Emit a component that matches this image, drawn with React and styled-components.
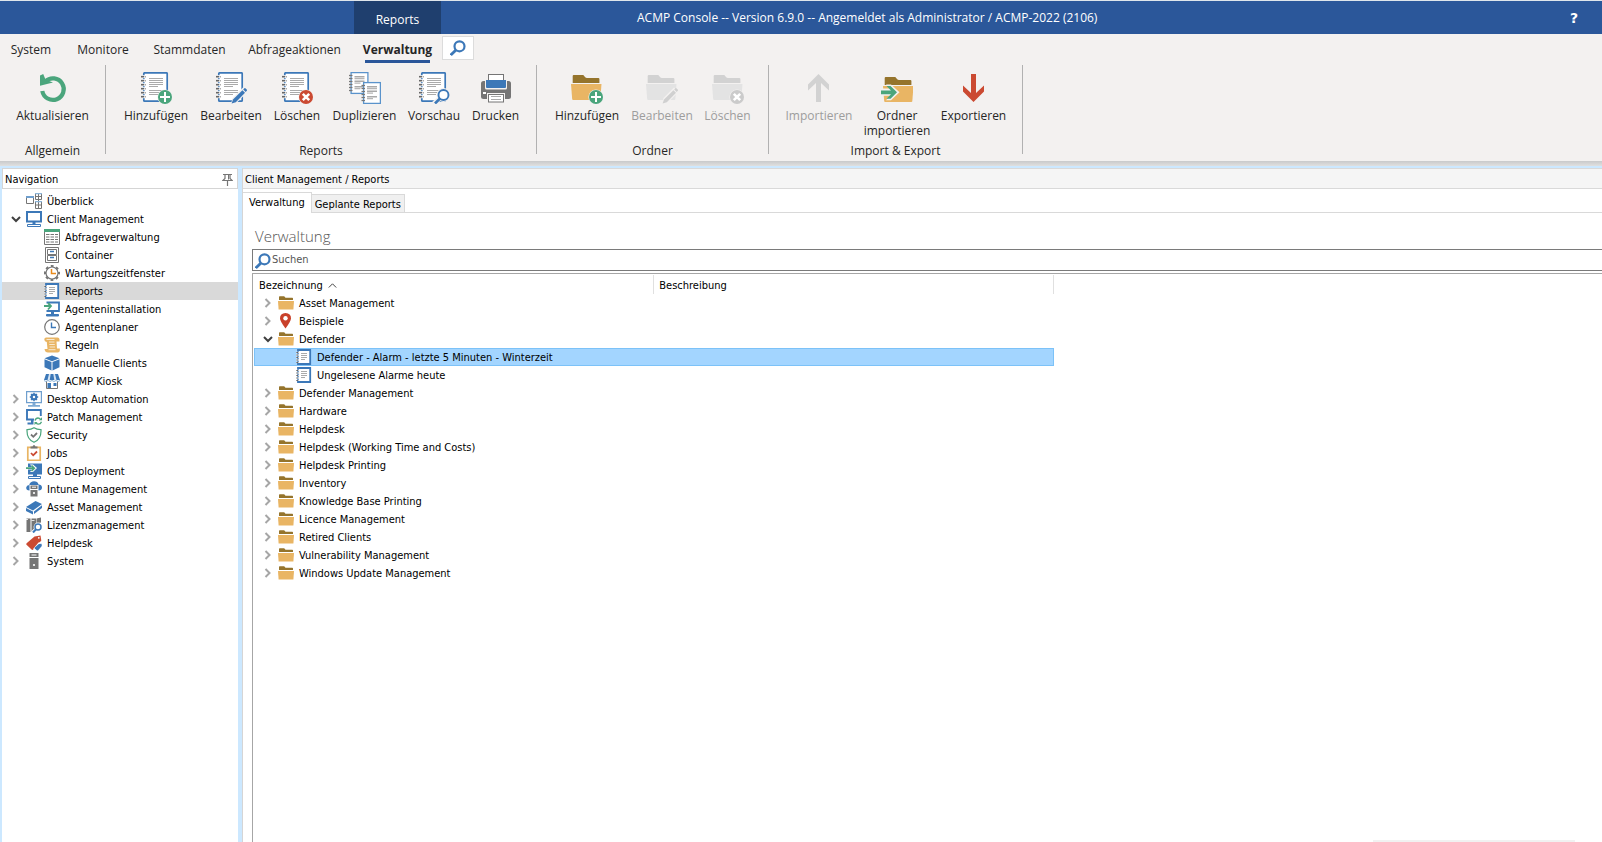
import React, { useState } from 'react';
import styled, { createGlobalStyle, css } from 'styled-components';

const BLUE = '#3c78b8';
const GREEN = '#4aa57c';
const RED = '#cb4a32';
const GREY = '#757575';
const SAND = '#e9b564';
const BROWN = '#95742c';

const GlobalStyle = createGlobalStyle`
  * {
    box-sizing: border-box;
  }

  html,
  body,
  #root {
    height: 100%;
    margin: 0;
  }

  body {
    font-family: 'DejaVu Sans Condensed', Tahoma, sans-serif;
    font-size: 11px;
    color: #000;
    background: #fff;
    overflow: hidden;
  }

  button,
  input {
    font: inherit;
    color: inherit;
    border: 0;
    padding: 0;
    margin: 0;
    background: none;
  }

  ul {
    list-style: none;
    margin: 0;
    padding: 0;
  }

  a {
    color: inherit;
    text-decoration: none;
  }

  svg {
    display: block;
    flex: none;
  }
`;

const StyledApp = styled.div`
  position: relative;
  display: flex;
  flex-direction: column;
  min-height: 100%;
  overflow: hidden;
`;

const StyledTitleBar = styled.header`
  display: flex;
  height: 34px;
  padding-left: 354px;
  border-top: 1px solid #dfe6ec;
  background: #2b579a;
  color: #fff;
  font-family: 'Open Sans', 'Segoe UI', sans-serif;
  font-size: 12px;

  .context-tab {
    width: 87px;
    padding-top: 4px;
    background: #1f3f6e;
  }

  .title {
    flex: 1;
    margin: 0 0 0 196px;
    font-size: inherit;
    font-weight: 400;
    line-height: 33px;
  }

  .help {
    width: 56px;
    padding-top: 1px;
    font-family: 'DejaVu Sans', sans-serif;
    font-size: 14px;
    font-weight: 700;
  }
`;

const StyledRibbon = styled.div`
  background: #f3f1f0;
  color: #262626;
  font-family: 'Open Sans', 'Segoe UI', sans-serif;
  font-size: 12px;
  padding-bottom: 7px;
`;

const StyledMenu = styled.nav`
  display: flex;
  height: 31px;
  padding-left: 11px;
`;

const MenuTab = styled.button`
  display: flex;
  align-items: center;
  justify-content: center;
  width: ${props => props.$width}px;
  height: 29px;
  padding-top: 1px;
  margin-right: 27px;
  white-space: nowrap;

  ${props =>
    props.$active &&
    css`
      margin-right: 12px;
      padding-top: 4px;
      border-bottom: 3px solid #2b579a;
      font-weight: 700;
    `}
`;

const MenuSearch = styled.button`
  display: flex;
  align-items: center;
  justify-content: center;
  width: 32px;
  height: 24px;
  margin-top: 2px;
  border: 1px solid #dcdcdc;
  background: #fff;
`;

const StyledGroups = styled.div`
  display: flex;
`;

const RibbonGroup = styled.section`
  display: flex;
  flex-direction: column;
  justify-content: space-between;
  align-items: center;
  height: 89px;
  padding: 7px 11px 0;
  border-right: 1px solid #b1b1b1;

  .buttons {
    display: flex;
  }

  h2 {
    margin: 0;
    font-size: inherit;
    font-weight: 400;
    line-height: 7px;
  }
`;

const RibbonButton = styled.button`
  display: flex;
  flex-direction: column;
  align-items: center;
  width: ${props => props.$width}px;
  text-align: center;

  span {
    margin-top: 4px;
    line-height: 15px;
    white-space: pre;
  }

  &:disabled {
    color: #9d9d9d;
  }
`;

const StyledShadow = styled.div`
  height: 5px;
  background: linear-gradient(#c9cacb, #e0e0e0);
`;

const StyledWorkspace = styled.div`
  flex: 1;
  display: flex;
  gap: 4px;
  padding: 2px 0 0 2px;
  background: #cce8ff;
`;

const StyledSidebar = styled.aside`
  width: 236px;
  background: #fff;

  header {
    display: flex;
    align-items: center;
    justify-content: space-between;
    height: 21px;
    padding: 1px 4px 0 2px;
    border: 1px solid #d5d5d5;
  }

  > ul {
    padding-top: 3px;
  }
`;

const NavRow = styled.a`
  display: flex;
  align-items: center;
  height: 18px;
  padding-left: ${props => props.$level * 18}px;
  background: ${props => (props.$selected ? '#d9d9d9' : 'transparent')};
  white-space: nowrap;

  .chevron {
    width: 24px;
    padding-left: 9px;
  }

  .label {
    margin-left: 5px;
  }
`;

const StyledContent = styled.main`
  flex: 1;
  min-width: 0;
  display: flex;
  flex-direction: column;
  background: #fff;
  border-left: 1px solid #d5d5d5;

  h1 {
    margin: 12px 0 2px 12px;
    font-family: 'Open Sans', 'Segoe UI', sans-serif;
    font-size: 15px;
    font-weight: 300;
    line-height: 22px;
    color: #555;
  }
`;

const Breadcrumb = styled.nav`
  height: 21px;
  padding: 1px 0 0 2px;
  line-height: 19px;
  border: 1px solid #d9d9d9;
  border-width: 1px 0;
  background: #f5f5f5;
`;

const StyledTabs = styled.div`
  display: flex;
  align-items: flex-end;
  height: 24px;
  border-bottom: 1px solid #d9d9d9;
`;

const PageTab = styled.button`
  height: 18px;
  padding: 2px 3px 0;
  border: 1px solid #d9d9d9;
  border-width: 1px 1px 0 0;
  background: #f0f0f0;

  ${props =>
    props.$active &&
    css`
      height: 21px;
      padding: 0 6px 2px;
      margin-bottom: -1px;
      background: #fff;
    `}
`;

const SearchBox = styled.label`
  display: flex;
  align-items: center;
  height: 22px;
  margin-left: 9px;
  padding: 1px 0 0 2px;
  border: 1px solid #7a7a7a;
  border-right: 0;

  input {
    flex: 1;
    margin: 0 0 2px 1px;
    outline: 0;
  }

  input::placeholder {
    color: #555;
    opacity: 1;
  }
`;

const GridBox = styled.div`
  flex: 1;
  margin: 2px 0 0 9px;
  padding: 1px;
  border: 1px solid #a6a6a6;
  border-width: 1px 0 0 1px;
`;

const ReportTable = styled.table`
  width: 800px;
  table-layout: fixed;
  border-collapse: collapse;

  th {
    height: 19px;
    padding: 1px 0 0 5px;
    border-right: 1px solid #e0e0e0;
    font-weight: 400;
    text-align: left;
  }

  th > div {
    display: flex;
    align-items: center;
    gap: 5px;
  }

  td {
    height: 18px;
    padding: 0;
    white-space: nowrap;
  }
`;

const ReportRow = styled.tr`
  ${props =>
    props.$selected &&
    css`
      background: #a3d5ff;
      box-shadow: inset 0 0 0 1px #7cc2f8;
    `}

  .name {
    display: flex;
    align-items: center;
    padding-left: ${props => props.$level * 18}px;
  }

  .chevron {
    width: 24px;
    padding-left: 9px;
  }

  .label {
    margin-left: 5px;
  }
`;

const NotificationEdge = styled.div`
  position: absolute;
  right: 27px;
  bottom: 0;
  width: 202px;
  height: 2px;
  background: #f1f1f1;
`;

/* ---------- large ribbon icons ---------- */

const Big = ({ children }) => (
  <svg width="32" height="32" viewBox="0 0 32 32" fill="none" aria-hidden="true">
    {children}
  </svg>
);

const Plus = () => (
  <g>
    <circle cx="25" cy="25" r="7.6" fill="#f3f1f0" />
    <circle cx="25" cy="25" r="7" fill={GREEN} />
    <path d="M25 20v10M20 25h10" stroke="#fff" strokeWidth="2" />
  </g>
);

const Cross = ({ color = RED }) => (
  <g>
    <circle cx="25" cy="25" r="7.6" fill="#f3f1f0" />
    <circle cx="25" cy="25" r="7" fill={color} />
    <path d="M21.8 21.8l6.4 6.4M28.2 21.8l-6.4 6.4" stroke="#fff" strokeWidth="2.6" />
  </g>
);

const Pencil = ({ color = BLUE }) => (
  <g>
    <path d="M16 32l1.5-6L28 15.5l5 4L21.5 31z" fill="#f3f1f0" />
    <path d="M16.6 31.6l1.4-4.2 9.4-9.2 2.6 2.6-9.2 9.4z" fill={color} />
    <path d="M28.2 17.4l1.2-1.2q.7-.4 1.3.2l1 1q.6.7.1 1.400l-1.1 1.100z" fill={color} />
  </g>
);

const Sheet = () => (
  <g>
    <rect x="3.8" y=".8" width="23.4" height="28.4" rx=".8" fill="#fff" stroke={BLUE} strokeWidth="1.7" />
    {[4, 8, 12, 16, 20, 24].map(y => (
      <g key={y}>
        <rect x="2.5" y={y - 0.8} width="2.8" height="3" fill="#fff" />
        <path d={`M1 ${y + 0.7}h3`} stroke="#666" strokeWidth="1.6" />
        <path d={`M4.6 ${y + 0.7}h1.2`} stroke="#999" strokeWidth="1.4" />
      </g>
    ))}
    <path
      d="M9 6.5h14M9 8.5h14M9 10.5h14M9 12.5h14M9 14.5h9M9 18.5h14M9 20.5h14M9 22.5h9"
      stroke="#aaa"
    />
  </g>
);

const SmallSheet = ({ x, y }) => (
  <g transform={`translate(${x} ${y})`}>
    <rect x="2.6" y=".6" width="16.8" height="20.8" fill="#fff" stroke="#5a93cb" strokeWidth="1.3" />
    {[3.5, 6.5, 9.5, 12.5, 15.5, 18.5].map(v => (
      <path key={v} d={`M.5 ${v}h3.5`} stroke="#777" strokeWidth="1.3" />
    ))}
    <path d="M6 4.7h10M6 9.2h10M6 14.7h10" stroke="#aaa" strokeWidth="1.4" />
    <path d="M6 6.7h10M6 11.2h6M6 16.7h6" stroke="#b5b5b5" strokeWidth="1.3" />
  </g>
);

const Folder = ({ off, x = 0, y = 0 }) => (
  <g transform={`translate(${x} ${y})`}>
    <path
      d="M1.7 11V4q0-1 1-1h9.6l1.7 2q.8 1 2 1h11.4q1 0 1 1v4z"
      fill={off ? '#d2d2d2' : BROWN}
    />
    <path
      d="M0 12h30.5l-1.2 15.2q-.1.8-1 .8H2.2q-.9 0-1-.8z"
      fill={off ? '#e3e3e3' : SAND}
    />
  </g>
);

const UP_ARROW = 'M15.5 2L26 12.5v6L18 11v19h-5V11l-8 7.5v-6z';

const RefreshIcon = () => (
  <Big>
    <path d="M5.3 19A10.8 10.8 0 1 0 8.5 9.3" stroke={GREEN} strokeWidth="4.2" />
    <path d="M3 3.5L6.2 2l2.3 5.500 7.500 3-13 3.200z" fill={GREEN} />
  </Big>
);

const SheetAdd = () => (
  <Big>
    <Sheet />
    <Plus />
  </Big>
);

const SheetEdit = () => (
  <Big>
    <Sheet />
    <Pencil />
  </Big>
);

const SheetDelete = () => (
  <Big>
    <Sheet />
    <Cross />
  </Big>
);

const SheetCopy = () => (
  <Big>
    <SmallSheet x={-0.5} y={0} />
    <SmallSheet x={12} y={10} />
  </Big>
);

const SheetPreview = () => (
  <Big>
    <Sheet />
    <circle cx="25.5" cy="23" r="7" fill="#f3f1f0" />
    <path d="M22 26l-6 5.5" stroke="#f3f1f0" strokeWidth="5" />
    <circle cx="25.5" cy="23" r="5" fill="#fff" stroke={BLUE} strokeWidth="1.9" />
    <path d="M22 26.5l-5 5" stroke={BLUE} strokeWidth="2.6" />
  </Big>
);

const PrinterIcon = () => (
  <Big>
    <rect x="1" y="9" width="30" height="18" rx="2.5" fill={GREY} />
    <rect x="8.5" y="2.5" width="15" height="8" fill="#fff" stroke={GREY} />
    <path d="M5 7h22v9q0 1.5-1.5 1.5h-19Q5 17.5 5 16z" fill="#f3f1f0" />
    <path d="M6 8h20v7q0 1-1 1H7q-1 0-1-1z" fill={BLUE} />
    <path d="M9 3h14v5H9z" fill="#fff" />
    <path d="M8.500 8V2.500h15V8" stroke={GREY} />
    <rect x="3" y="20" width="3" height="2" fill="#fff" />
    <path d="M7 27v-6h18v6z" fill="#f3f1f0" />
    <rect x="8.5" y="22.5" width="15" height="7.5" fill="#fff" stroke={GREY} />
    <path d="M11 24.5h10M11 27.5h10" stroke="#aaa" />
  </Big>
);

const FolderAdd = () => (
  <Big>
    <Folder />
    <Plus />
  </Big>
);

const FolderEditOff = () => (
  <Big>
    <Folder off />
    <Pencil color="#d0d0d0" />
  </Big>
);

const FolderDeleteOff = () => (
  <Big>
    <Folder off />
    <Cross color="#cbcbcb" />
  </Big>
);

const ImportOff = () => (
  <Big>
    <path d={UP_ARROW} fill="#d2d2d2" />
  </Big>
);

const FolderImport = () => (
  <Big>
    <Folder x={2} y={2} />
    <path d="M-1 16.5h10l-4-4h5l8.5 7.8-8.5 8H5l4-4.5H-1z" fill="#f3f1f0" />
    <path d="M0 18.5h10L5.500 14h4l6.500 6.300-6.500 6.500h-4l4.500-4.600H0z" fill={GREEN} />
  </Big>
);

const ExportIcon = () => (
  <Big>
    <path d={UP_ARROW} fill={RED} transform="rotate(180 15.5 16)" />
  </Big>
);

const Magnifier = () => (
  <svg width="16" height="16" viewBox="0 0 16 16" fill="none" aria-hidden="true">
    <circle cx="9.5" cy="6.3" r="5" stroke={BLUE} strokeWidth="2.2" />
    <path d="M6 10l-5.2 5" stroke={BLUE} strokeWidth="2.8" />
  </svg>
);

/* ---------- 16px tree icons ---------- */

const Small = ({ children }) => (
  <svg width="16" height="16" viewBox="0 0 16 16" fill="none" aria-hidden="true">
    {children}
  </svg>
);

const OverviewIcon = () => (
  <Small>
    <path d="M.5 3.5h7v7h-7z" stroke={GREY} />
    <path d="M0 3h8v2H0z" fill="#6f9fce" />
    <path d="M9.5.5h6v6h-6zM9.5 8.5h6v7h-6zM12.5.5v15M9 3.5h6.5M9 12h6.5" stroke={GREY} />
    <path d="M9 0h7v1.3H9zM9 8h7v1.3H9z" fill="#8cb4d8" />
  </Small>
);

const MonitorIcon = () => (
  <Small>
    <path d="M1 1h14v9.5H1z" fill="#fff" stroke={BLUE} strokeWidth="2" />
    <path d="M6.5 11h3v2h-3z" fill={BLUE} />
    <path d="M1.5 13.5h13v2h-13z" stroke={BLUE} />
  </Small>
);

const ListIcon = () => (
  <Small>
    <path d="M.5 2v13.5h15V2" fill="#fff" stroke={GREY} />
    <path d="M0 0h16v3H0z" fill={GREEN} />
    {[5.5, 8, 10.5, 13].map(y => (
      <path key={y} d={`M2 ${y}h3.5M6.5 ${y}h3.5M11 ${y}h3`} stroke={GREY} />
    ))}
  </Small>
);

const ContainerIcon = () => (
  <Small>
    <path d="M1.5.5h13v15h-13z" fill="#fff" stroke={GREY} />
    <path d="M3.5 2.5h9v5h-9zM3.5 8.5h9v5h-9z" stroke={GREY} />
    <path d="M6 4.5h4M6 10.5h4" stroke={BLUE} strokeWidth="1.5" />
  </Small>
);

const MaintenanceIcon = () => (
  <Small>
    <circle
      cx="8"
      cy="8"
      r="7"
      stroke={GREY}
      strokeWidth="2"
      strokeDasharray="2.75 2.75"
      strokeDashoffset="1.4"
    />
    <circle cx="8" cy="8" r="6" fill="#fff" stroke={GREY} strokeWidth="1.2" />
    <path d="M7.5 4v4.5H12" stroke="#e98a1c" strokeWidth="1.5" />
  </Small>
);

const ReportIcon = () => (
  <Small>
    <path d="M2 1h12.2v14H2z" fill="#fff" stroke={BLUE} strokeWidth="1.8" />
    <path d="M1.5 2.700v11.300" stroke="#fff" strokeWidth="3" strokeDasharray="1.5 1" />
    <path d="M.3 3.5h2M.3 6h2M.3 8.5h2M.3 11h2M.3 13.5h2" stroke="#666" />
    <path d="M5 4.5h6M5 6.5h6M5 8.5h6M5 10.5h4" stroke="#aaa" />
  </Small>
);

const AgentInstallIcon = () => (
  <Small>
    <path d="M2.5 1.5h12.5V10H2.5" fill="#fff" stroke={BLUE} strokeWidth="1.8" />
    <path d="M7 10.5h3V13H7z" fill={BLUE} />
    <path d="M2.5 13.5h12V15h-12z" fill={BLUE} stroke={BLUE} />
    <path d="M0 5h6M4 2l3 3-3 3.500" stroke={GREEN} strokeWidth="1.8" />
  </Small>
);

const ClockIcon = () => (
  <Small>
    <circle cx="8" cy="8" r="7.3" fill="#fff" stroke={GREY} strokeWidth="1.2" />
    <path d="M7.5 3.5v5H12" stroke={BLUE} strokeWidth="1.4" />
  </Small>
);

const RulesIcon = () => (
  <Small>
    <path
      d="M2.500 .5h11q2 0 2 2v2h-3L13 11.500h2.800v2q0 2-2.200 2H4q-3 0-3.500-3.500h3L2.800 5Q.3 4.700 .3 2.500t2.200-2z"
      fill={SAND}
    />
    <path d="M5 5h5.500M5.300 7.500h5.500M5.600 10h5.500M4.500 12.700h7M2.500 2.500h8" stroke="#fff" strokeWidth=".7" />
  </Small>
);

const CubeIcon = () => (
  <Small>
    <path
      d="M8 .5l7.5 2.7L8 6.2.5 3.2zM.5 4.3l7 2.8v8.400l-7-3.200zM15.5 4.3l-7 2.8v8.400l7-3.200z"
      fill={BLUE}
    />
  </Small>
);

const KioskIcon = () => (
  <Small>
    <path d="M2 1h12l2 6H0z" fill={BLUE} />
    <path d="M5 1L3.500 7h2.200L6.700 1zM11 1l1.500 6h-2.200L9.300 1z" fill="#d5e4f3" />
    <path d="M2.500 8v7.5h11V8" fill="#fff" stroke={GREY} />
    <path d="M3.500 10h3.500v5H3.500zM9.500 10h3v3h-3z" fill={BLUE} />
    <path d="M0 7.500q2 2 4 0 2 2 4 0 2 2 4 0 2 2 4 0" stroke="#8cb4d8" />
  </Small>
);

const AutomationIcon = () => (
  <Small>
    <path d="M.6.6h14.800v11H.6z" fill="#fff" stroke="#6f9fce" strokeWidth="1.2" />
    <circle cx="8" cy="6" r="2.3" stroke={BLUE} strokeWidth="2.2" />
    <path
      d="M8 1.800v1.700M8 8.500v1.700M3.800 6h1.700M10.500 6h1.700M5 3l1 1M11 3l-1 1M5 9l1-1M11 9l-1-1"
      stroke={BLUE}
      strokeWidth="1.3"
    />
    <path d="M6.500 12h3v2h-3zM2 14h12v1.800H2z" fill="#7eaad4" />
  </Small>
);

const PatchIcon = () => (
  <Small>
    <path d="M8 10.500H1V1h13.800v6" fill="#fff" stroke={BLUE} strokeWidth="1.9" />
    <path d="M5 10.500h2.500v3H5zM1.500 13.500h6v2h-6z" fill={BLUE} />
    <path
      d="M9 11.500q.8-2.500 3-2.500 1.500 0 2.500 1.300M15.500 12.800q-.8 2.400-3 2.400-1.500 0-2.500-1.300"
      stroke={GREEN}
      strokeWidth="1.3"
    />
    <path d="M16 8.300v3h-3zM8.500 16v-3h3z" fill={GREEN} />
  </Small>
);

const ShieldIcon = () => (
  <Small>
    <path
      d="M8 .8q3 2 7 1.900.4 9.300-7 12.600Q.6 12 1 2.700 5 2.800 8 .8z"
      fill="#fff"
      stroke={GREEN}
      strokeWidth="1.2"
    />
    <path d="M5 7.500l2.300 2.300L11 6" stroke={GREY} strokeWidth="1.8" />
  </Small>
);

const JobsIcon = () => (
  <Small>
    <path d="M1.800 2.300h12.400v13H1.800z" fill="#fff" stroke={SAND} strokeWidth="1.7" />
    <path d="M4.500 1.500h2Q7 0 8 0t1.500 1.500h2v2h-7z" fill={GREY} />
    <path d="M5 8l2.200 2.300L11 6.500" stroke={RED} strokeWidth="1.8" />
  </Small>
);

const DeployIcon = () => (
  <Small>
    <path d="M2 .5h14v11H2z" fill={BLUE} />
    <path d="M7 11h4v2.500H7z" fill={BLUE} />
    <path d="M2.500 13.500h12v2h-12z" stroke={BLUE} />
    <path d="M0 4h6L4 1.500h3L11 5 7 9H4l2-2.500H0z" fill="#fff" />
    <path d="M0 5.200h8M5.500 2.500l2.800 2.700-2.800 2.800" stroke={GREEN} strokeWidth="1.7" />
  </Small>
);

const IntuneIcon = () => (
  <Small>
    <path
      d="M3.500 9.500Q0 9.500.2 6.500.5 4 3.200 4 4.300.3 8 .3T12.500 3.500q3.300 0 3.500 3 0 3-3.500 3z"
      fill={BLUE}
    />
    <path d="M3.500 4h9v12h-9z" fill="#fff" />
    <path d="M4.500 4.500h7V8h-7zM4.500 9h7v6.500h-7z" fill={GREY} />
    <path d="M6 6.200h4" stroke="#fff" />
    <circle cx="8" cy="12" r="1.1" fill="#fff" />
  </Small>
);

const AssetIcon = () => (
  <Small>
    <path d="M9.500 2L16 5 7 11.500 0 8zM0 9l7 3.500v3L0 12zM8 12.400l8-6.200V9l-8 6z" fill={BLUE} />
  </Small>
);

const LicenceIcon = () => (
  <Small>
    <path d="M.5 1.500h4V15h-4zM5.500 1.500h4.500V15H5.500zM10.500 1.500l4.500-1v5l-4.500 1z" fill={GREY} />
    <path d="M0 2.500h2M5.500 3.500h3" stroke="#fff" strokeWidth=".8" />
    <circle cx="12" cy="10" r="4.4" fill="#fff" />
    <path d="M10 12.500l-3.500 3.500" stroke="#fff" strokeWidth="4" />
    <circle cx="12" cy="10" r="3" fill="#fff" stroke={BLUE} strokeWidth="1.5" />
    <path d="M9.800 12.500L7 15.500" stroke={BLUE} strokeWidth="2" />
  </Small>
);

const HelpdeskIcon = () => (
  <Small>
    <path
      d="M8.500 1.500L14.500.5l.8 5L7.500 14.500Q6.500 15.300 5.500 14.500L.5 9.800Q0 9 .6 8.200z"
      fill={RED}
    />
    <circle cx="12.8" cy="2.8" r=".9" fill="#fff" />
    <path d="M12.500 7.500l4-.5v4L12 16H7.500v-2.500z" fill="#fff" />
    <path
      d="M12.800 9l2.700-.3.300 2.300-3.600 4.300q-.6.500-1.200.1L8.800 13.500q-.4-.6 0-1.100z"
      fill={BLUE}
    />
  </Small>
);

const ServerIcon = () => (
  <Small>
    <path d="M3.500 0h9v4h-9zM3.500 5h9v11h-9z" fill={GREY} />
    <path d="M5.500 2h5" stroke="#fff" />
    <circle cx="8" cy="12" r="1.1" fill="#fff" />
  </Small>
);

const FolderIcon = () => (
  <Small>
    <path d="M1 5V2q0-.7.7-.7h4.500l1.300 1.400h6.800q.7 0 .7.7V5z" fill={BROWN} />
    <path d="M0 6h16l-.6 8.500H.6z" fill={SAND} />
  </Small>
);

const PinIcon = () => (
  <Small>
    <path d="M7.500 0Q13 .3 13 5.300q0 3-5.500 10.200Q2 8.300 2 5.300 2 .3 7.500 0z" fill="#c9412b" />
    <circle cx="7.5" cy="5.3" r="2.2" fill="#fff" />
  </Small>
);

const PushPin = () => (
  <svg width="11" height="13" viewBox="0 0 11 13" fill="none" stroke={GREY} aria-hidden="true">
    <path d="M1 1.500h9M3 1.500v4L.8 7.500h9.400L8 5.500v-4M5.500 8v5" strokeWidth="1.2" />
    <path d="M6.500 2v4.500" />
  </svg>
);

const Chevron = ({ open }) => (
  <svg width="10" height="10" viewBox="0 0 10 10" fill="none" aria-hidden="true">
    {open ? (
      <path d="M1 3l4 4 4-4" stroke="#404040" strokeWidth="2" />
    ) : (
      <path d="M2.500 1l4 4-4 4" stroke="#a6a6a6" strokeWidth="2" />
    )}
  </svg>
);

const SortArrow = () => (
  <svg width="9" height="5" viewBox="0 0 9 5" fill="none" aria-hidden="true">
    <path d="M.8 4.500L4.500.8l3.700 3.700" stroke="#444" />
  </svg>
);

/* ---------- data ---------- */

const menuTabs = [
  { label: 'System', width: 40 },
  { label: 'Monitore', width: 50 },
  { label: 'Stammdaten', width: 69 },
  { label: 'Abfrageaktionen', width: 87 },
  { label: 'Verwaltung', width: 65, active: true },
];

const ribbonGroups = [
  {
    title: 'Allgemein',
    buttons: [{ label: 'Aktualisieren', width: 83, icon: RefreshIcon }],
  },
  {
    title: 'Reports',
    buttons: [
      { label: 'Hinzufügen', width: 78, icon: SheetAdd },
      { label: 'Bearbeiten', width: 72, icon: SheetEdit },
      { label: 'Löschen', width: 60, icon: SheetDelete },
      { label: 'Duplizieren', width: 75, icon: SheetCopy },
      { label: 'Vorschau', width: 64, icon: SheetPreview },
      { label: 'Drucken', width: 59, icon: PrinterIcon },
    ],
  },
  {
    title: 'Ordner',
    buttons: [
      { label: 'Hinzufügen', width: 78, icon: FolderAdd },
      { label: 'Bearbeiten', width: 72, icon: FolderEditOff, disabled: true },
      { label: 'Löschen', width: 59, icon: FolderDeleteOff, disabled: true },
    ],
  },
  {
    title: 'Import & Export',
    buttons: [
      { label: 'Importieren', width: 78, icon: ImportOff, disabled: true },
      { label: 'Ordner\nimportieren', width: 78, icon: FolderImport },
      { label: 'Exportieren', width: 75, icon: ExportIcon },
    ],
  },
];

const navItems = [
  { label: 'Überblick', icon: OverviewIcon, leaf: true },
  { label: 'Client Management', icon: MonitorIcon, open: true },
  { label: 'Abfrageverwaltung', icon: ListIcon, level: 1 },
  { label: 'Container', icon: ContainerIcon, level: 1 },
  { label: 'Wartungszeitfenster', icon: MaintenanceIcon, level: 1 },
  { label: 'Reports', icon: ReportIcon, level: 1 },
  { label: 'Agenteninstallation', icon: AgentInstallIcon, level: 1 },
  { label: 'Agentenplaner', icon: ClockIcon, level: 1 },
  { label: 'Regeln', icon: RulesIcon, level: 1 },
  { label: 'Manuelle Clients', icon: CubeIcon, level: 1 },
  { label: 'ACMP Kiosk', icon: KioskIcon, level: 1 },
  { label: 'Desktop Automation', icon: AutomationIcon },
  { label: 'Patch Management', icon: PatchIcon },
  { label: 'Security', icon: ShieldIcon },
  { label: 'Jobs', icon: JobsIcon },
  { label: 'OS Deployment', icon: DeployIcon },
  { label: 'Intune Management', icon: IntuneIcon },
  { label: 'Asset Management', icon: AssetIcon },
  { label: 'Lizenzmanagement', icon: LicenceIcon },
  { label: 'Helpdesk', icon: HelpdeskIcon },
  { label: 'System', icon: ServerIcon },
];

const reports = [
  { label: 'Asset Management' },
  { label: 'Beispiele', icon: PinIcon },
  { label: 'Defender', open: true },
  { label: 'Defender - Alarm - letzte 5 Minuten - Winterzeit', icon: ReportIcon, level: 1 },
  { label: 'Ungelesene Alarme heute', icon: ReportIcon, level: 1 },
  { label: 'Defender Management' },
  { label: 'Hardware' },
  { label: 'Helpdesk' },
  { label: 'Helpdesk (Working Time and Costs)' },
  { label: 'Helpdesk Printing' },
  { label: 'Inventory' },
  { label: 'Knowledge Base Printing' },
  { label: 'Licence Management' },
  { label: 'Retired Clients' },
  { label: 'Vulnerability Management' },
  { label: 'Windows Update Management' },
];

/* ---------- sections ---------- */

const Ribbon = () => (
  <StyledRibbon>
    <StyledMenu>
      {menuTabs.map(({ label, width, active }) => (
        <MenuTab key={label} $width={width} $active={active}>
          {label}
        </MenuTab>
      ))}
      <MenuSearch aria-label="Suche">
        <Magnifier />
      </MenuSearch>
    </StyledMenu>

    <StyledGroups>
      {ribbonGroups.map(({ title, buttons }) => (
        <RibbonGroup key={title}>
          <div className="buttons">
            {buttons.map(({ label, width, icon: Icon, disabled }) => (
              <RibbonButton key={label} $width={width} disabled={disabled}>
                <Icon />
                <span>{label}</span>
              </RibbonButton>
            ))}
          </div>
          <h2>{title}</h2>
        </RibbonGroup>
      ))}
    </StyledGroups>
  </StyledRibbon>
);

const Sidebar = () => (
  <StyledSidebar>
    <header>
      <span>Navigation</span>
      <button aria-label="Anheften">
        <PushPin />
      </button>
    </header>
    <ul>
      {navItems.map(({ label, icon: Icon, level = 0, open, leaf }) => (
        <li key={label}>
          <NavRow href="#" $level={level} $selected={label === 'Reports'}>
            <span className="chevron">{!level && !leaf && <Chevron open={open} />}</span>
            <Icon />
            <span className="label">{label}</span>
          </NavRow>
        </li>
      ))}
    </ul>
  </StyledSidebar>
);

const ReportGrid = () => {
  const [selected, setSelected] = useState(3);

  return (
    <GridBox>
      <ReportTable>
        <thead>
          <tr>
            <th>
              <div>
                Bezeichnung <SortArrow />
              </div>
            </th>
            <th>Beschreibung</th>
          </tr>
        </thead>
        <tbody>
          {reports.map(({ label, icon: Icon = FolderIcon, level = 0, open }, i) => (
            <ReportRow
              key={label}
              $level={level}
              $selected={i === selected}
              onClick={() => setSelected(i)}>
              <td>
                <div className="name">
                  <span className="chevron">{!level && <Chevron open={open} />}</span>
                  <Icon />
                  <span className="label">{label}</span>
                </div>
              </td>
              <td />
            </ReportRow>
          ))}
        </tbody>
      </ReportTable>
    </GridBox>
  );
};

const App = () => (
  <StyledApp>
    <GlobalStyle />
    <StyledTitleBar>
      <button className="context-tab">Reports</button>
      <p className="title">
        ACMP Console -- Version 6.9.0 -- Angemeldet als Administrator / ACMP-2022 (2106)
      </p>
      <button className="help">?</button>
    </StyledTitleBar>
    <Ribbon />
    <StyledShadow />
    <StyledWorkspace>
      <Sidebar />
      <StyledContent>
        <Breadcrumb>Client Management / Reports</Breadcrumb>
        <StyledTabs>
          <PageTab $active>Verwaltung</PageTab>
          <PageTab>Geplante Reports</PageTab>
        </StyledTabs>
        <h1>Verwaltung</h1>
        <SearchBox>
          <Magnifier />
          <input type="text" placeholder="Suchen" aria-label="Suchen" />
        </SearchBox>
        <ReportGrid />
      </StyledContent>
    </StyledWorkspace>
    <NotificationEdge />
  </StyledApp>
);

export default App;
